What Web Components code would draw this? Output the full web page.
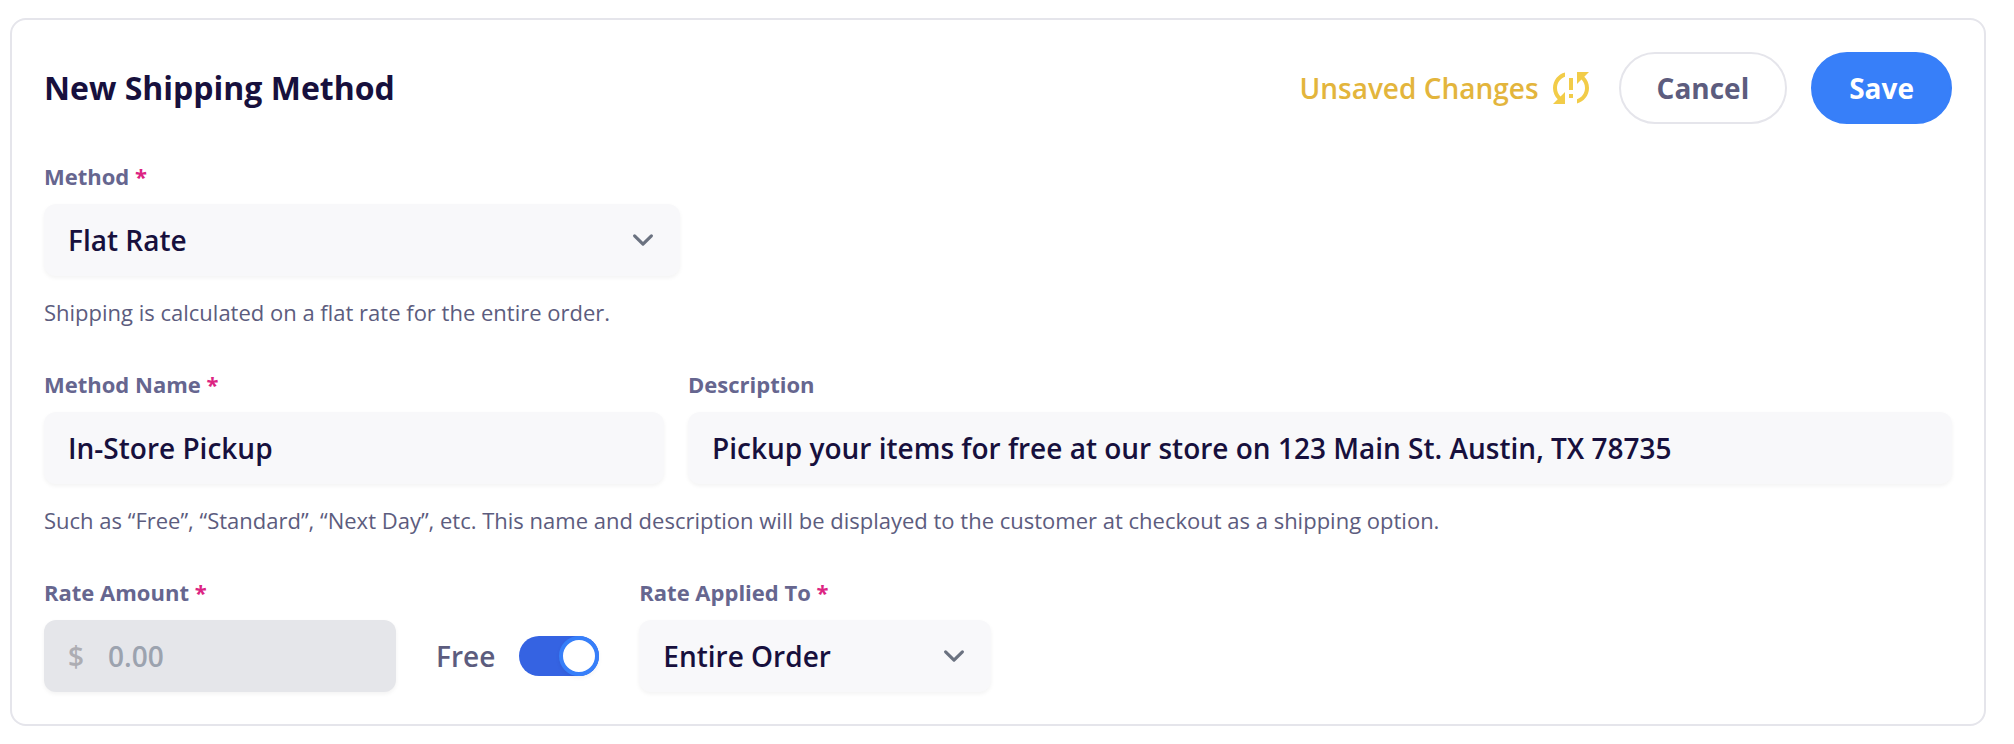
<!DOCTYPE html>
<html lang="en">
<head>
<meta charset="utf-8">
<title>New Shipping Method</title>
<style>
  body {
    margin: 0;
    padding: 18px 28px 18px 10px;
    background: #fff;
    font-family: "Open Sans", sans-serif;
    --ink: #17103d;
    --label: #66668f;
    --muted: #5c5c7e;
    --line: #e5e5eb;
    --field: #f8f8fa;
    --primary: #377ff9;
  }
</style>
</head>
<body>
<shipping-form></shipping-form>

<template id="field-styles">
  <style>
    :host { display: block; min-width: 0; }
    label { display: block; font-size: 22px; line-height: 32px; font-weight: 700; color: var(--label); margin-bottom: 12px; }
    .req { color: #dc2482; }
    .box { display: grid; align-items: center; height: 72px; border-radius: 12px; background: var(--field); box-shadow: 0 2px 4px rgba(0, 0, 0, 0.05); }
    .box > * { grid-area: 1 / 1; }
    input, select { appearance: none; box-sizing: border-box; width: 100%; height: 100%; margin: 0; border: 0; padding: 0 24px; background: transparent; border-radius: 12px; font-family: inherit; font-size: 28px; font-weight: 600; color: var(--ink); outline: none; }
    input:focus-visible, select:focus-visible { box-shadow: 0 0 0 2px var(--primary); }
    svg { justify-self: end; width: 42px; height: 42px; margin-right: 16px; pointer-events: none; }
    .prefix { padding-left: 24px; font-size: 28px; font-weight: 600; color: #adadb3; }
    .has-prefix input { padding-left: 64px; }
    .disabled { background: #e5e6ea; }
    input::placeholder { color: #9ca3af; opacity: 1; }
  </style>
</template>

<script>
  const fieldStyles = document.getElementById('field-styles');

  class FieldBase extends HTMLElement {
    connectedCallback() {
      const root = this.attachShadow({ mode: 'open' });
      root.append(fieldStyles.content.cloneNode(true));
      const body = document.createElement('template');
      const mark = this.hasAttribute('required') ? ' <span class="req">*</span>' : '';
      body.innerHTML = `<label for="control">${this.getAttribute('label')}${mark}</label>${this.control()}`;
      root.append(body.content);
    }
  }

  customElements.define('text-field', class extends FieldBase {
    control() {
      const prefix = this.getAttribute('prefix');
      const disabled = this.hasAttribute('disabled');
      return `<div class="box ${prefix ? 'has-prefix' : ''} ${disabled ? 'disabled' : ''}">
        ${prefix ? `<span class="prefix">${prefix}</span>` : ''}
        <input id="control" type="text" value="${this.getAttribute('value') || ''}"
          placeholder="${this.getAttribute('placeholder') || ''}" ${disabled ? 'disabled' : ''}>
      </div>`;
    }
  });

  customElements.define('select-field', class extends FieldBase {
    control() {
      return `<div class="box">
        <select id="control"><option>${this.getAttribute('value')}</option></select>
        <svg viewBox="0 0 20 20" fill="none" stroke="#6b7280" stroke-width="1.5" stroke-linecap="round" stroke-linejoin="round" aria-hidden="true"><path d="M6 8l4 4 4-4"/></svg>
      </div>`;
    }
  });

  customElements.define('toggle-switch', class extends HTMLElement {
    connectedCallback() {
      this.attachShadow({ mode: 'open' }).innerHTML = `
        <style>
          :host { display: block; }
          label { display: flex; align-items: center; gap: 24px; height: 72px; font-size: 28px; font-weight: 600; color: var(--muted); }
          input { appearance: none; display: flex; margin: 0; width: 80px; height: 40px; border-radius: 20px; background: #d1d5db; }
          input::before { content: ""; box-sizing: border-box; width: 40px; height: 40px; border-radius: 50%; background: #fff; border: 4px solid #d1d5db; box-shadow: 0 2px 4px rgba(0, 0, 0, 0.05); }
          input:checked { justify-content: flex-end; background: #3563e2; }
          input:checked::before { border-color: var(--primary); }
        </style>
        <label><slot></slot><input type="checkbox" role="switch" checked></label>`;
    }
  });

  customElements.define('pill-button', class extends HTMLElement {
    connectedCallback() {
      this.attachShadow({ mode: 'open' }).innerHTML = `
        <style>
          :host { display: block; }
          button { display: block; box-sizing: border-box; height: 72px; padding: 0 36px; border: 2px solid var(--line); border-radius: 36px; background: #fff; font-family: inherit; font-size: 28px; font-weight: 700; color: var(--muted); cursor: pointer; }
          :host([primary]) button { background: var(--primary); border-color: var(--primary); color: #fff; }
        </style>
        <button type="button"><slot></slot></button>`;
    }
  });

  customElements.define('unsaved-status', class extends HTMLElement {
    connectedCallback() {
      this.attachShadow({ mode: 'open' }).innerHTML = `
        <style>
          :host { display: flex; align-items: center; gap: 8px; font-size: 28px; font-weight: 600; color: #e3b53c; }
          svg { width: 48px; height: 48px; fill: #f2cc48; }
        </style>
        <slot></slot>
        <svg viewBox="0 0 24 24" aria-hidden="true"><path d="M3 12c0 2.21.91 4.2 2.36 5.64L3 20h6v-6l-2.24 2.24C5.68 15.15 5 13.66 5 12c0-2.61 1.67-4.83 4-5.65V4.26C5.55 5.15 3 8.27 3 12zm8 5h2v-2h-2v2zM21 4h-6v6l2.24-2.24C18.32 8.85 19 10.34 19 12c0 2.61-1.67 4.83-4 5.65v2.09c3.45-.89 6-4.01 6-7.74 0-2.21-.91-4.2-2.36-5.64L21 4zm-10 9h2V7h-2v6z"/></svg>`;
    }
  });

  customElements.define('shipping-form', class extends HTMLElement {
    connectedCallback() {
      this.attachShadow({ mode: 'open' }).innerHTML = `
        <style>
          :host { display: block; border: 2px solid var(--line); border-radius: 16px; padding: 32px; background: #fff; }
          header { display: flex; align-items: center; justify-content: space-between; margin-bottom: 36px; }
          h1 { margin: 0; font-size: 32px; line-height: 44px; font-weight: 700; color: var(--ink); }
          .actions { display: flex; align-items: center; gap: 24px; }
          section + section { margin-top: 40px; }
          .third { width: calc(100% / 3); }
          .grid { display: grid; grid-template-columns: repeat(3, 1fr); gap: 24px; }
          .wide { grid-column: span 2; }
          p { margin: 20px 0 0; font-size: 22px; line-height: 32px; color: var(--muted); }
          .rates { display: flex; align-items: flex-end; gap: 40px; }
          .amount { width: 352px; }
        </style>
        <header>
          <h1>New Shipping Method</h1>
          <div class="actions">
            <unsaved-status>Unsaved Changes</unsaved-status>
            <pill-button>Cancel</pill-button>
            <pill-button primary>Save</pill-button>
          </div>
        </header>
        <section>
          <select-field class="third" label="Method" value="Flat Rate" required></select-field>
          <p>Shipping is calculated on a flat rate for the entire order.</p>
        </section>
        <section>
          <div class="grid">
            <text-field label="Method Name" value="In-Store Pickup" required></text-field>
            <text-field class="wide" label="Description" value="Pickup your items for free at our store on 123 Main St. Austin, TX 78735"></text-field>
          </div>
          <p>Such as “Free”, “Standard”, “Next Day”, etc. This name and description will be displayed to the customer at checkout as a shipping option.</p>
        </section>
        <section class="rates">
          <text-field class="amount" label="Rate Amount" prefix="$" placeholder="0.00" disabled required></text-field>
          <toggle-switch>Free</toggle-switch>
          <select-field class="amount" label="Rate Applied To" value="Entire Order" required></select-field>
        </section>`;
    }
  });
</script>
</body>
</html>
